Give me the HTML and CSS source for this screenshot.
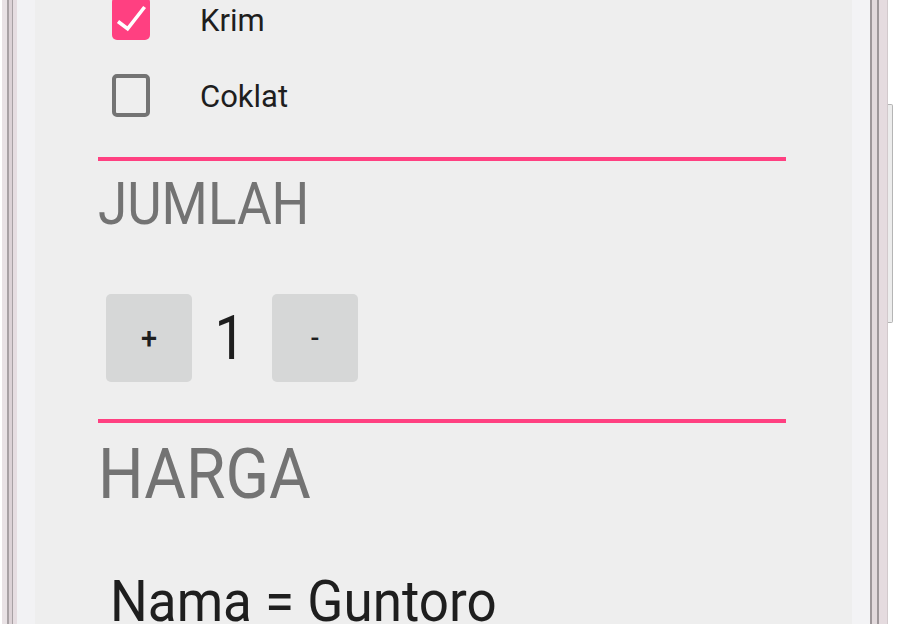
FILE: index.html
```html
<!DOCTYPE html>
<html>
<head>
<meta charset="utf-8">
<link rel="stylesheet" href="styles.css">
</head>
<body>
<div class="device">
  <div class="frame-left"></div>
  <div class="screen">
    <div class="content">
      <div class="checks">
        <div class="check-row">
          <span class="box checked">
            <svg viewBox="0 0 38 43" width="38" height="43"><polyline points="6,24.5 15.6,31.8 32.6,10" fill="none" stroke="#ffffff" stroke-width="3.6"/></svg>
          </span>
          <span class="check-label">Krim</span>
        </div>
        <div class="check-row">
          <span class="box"></span>
          <span class="check-label">Coklat</span>
        </div>
      </div>
      <div class="divider div-one"></div>
      <div class="section-title jumlah"><span class="stretch">JUMLAH</span></div>
      <div class="qty-row">
        <div class="qty-btn">+</div>
        <div class="qty-num"><span class="stretch">1</span></div>
        <div class="qty-btn minus">-</div>
      </div>
      <div class="divider div-two"></div>
      <div class="section-title harga"><span class="stretch">HARGA</span></div>
      <div class="summary"><span class="stretch">Nama = Guntoro</span></div>
    </div>
  </div>
  <div class="frame-right">
    <div class="side-button"></div>
  </div>
</div>
</body>
</html>
```

FILE: styles.css
```css
html, body {
  margin: 0;
  padding: 0;
  background: #ffffff;
}
body {
  width: 916px;
  height: 624px;
  overflow: hidden;
  font-family: Roboto, "Noto Sans", "Liberation Sans", sans-serif;
}
.device {
  display: flex;
  height: 624px;
}
.frame-left {
  width: 17px;
  flex: none;
  background: linear-gradient(to right,
    #ffffff 0 2px,
    #e9e2e5 2px 7px,
    #a8a1a4 7px 9px,
    #dcd2d6 9px 12px,
    #a8a1a4 12px 13.5px,
    #e6dde1 13.5px 17px);
}
.screen {
  width: 853px;
  flex: none;
  background: #eeeeee;
  border-left: 18px solid #f2f2f4;
  border-right: 18px solid #f3f3f5;
  box-sizing: border-box;
  overflow: hidden;
}
.content {
  padding-left: 63px;
  padding-right: 66px;
}
.checks {
  margin-top: -19px;
}
.check-row {
  height: 76px;
  display: flex;
  align-items: center;
  padding-left: 14px;
}
.box {
  width: 38px;
  height: 43px;
  box-sizing: border-box;
  border: 4px solid #737373;
  border-radius: 5px;
  flex: none;
  display: block;
}
.box.checked {
  background: #ff4081;
  border: none;
  position: relative;
  top: -0.5px;
}
.box svg {
  display: block;
}
.check-label {
  margin-left: 50px;
  font-size: 31px;
  color: #1e1e1e;
  position: relative;
  top: 1px;
}
.divider {
  height: 4px;
  background: #ff4081;
}
.div-one {
  margin-top: 24px;
}
.section-title {
  color: #737373;
  line-height: 1;
}
.stretch {
  display: inline-block;
  transform-origin: 0 0;
}
.jumlah {
  margin-top: 14px;
  font-size: 53px;
  height: 54px;
}
.jumlah .stretch {
  transform: scaleY(1.12);
}
.qty-row {
  margin-top: 65px;
  display: flex;
  align-items: center;
  padding-left: 8px;
}
.qty-btn {
  width: 86px;
  height: 88px;
  background: #d6d7d7;
  border-radius: 5px;
  display: flex;
  align-items: center;
  justify-content: center;
  font-size: 29px;
  font-weight: 500;
  color: #1e1e1e;
}
.qty-btn.minus {
  font-size: 26px;
}
.qty-num {
  width: 80px;
  text-align: center;
  font-size: 55px;
  line-height: 1;
  color: #1e1e1e;
}
.qty-num .stretch {
  transform-origin: 50% 50%;
  transform: scaleY(1.1);
  position: relative;
  left: -2px;
}
.div-two {
  margin-top: 37px;
}
.harga {
  margin-top: 17px;
  font-size: 64px;
  height: 64px;
}
.harga .stretch {
  transform: scaleY(1.1);
}
.summary {
  margin-top: 69px;
  padding-left: 12px;
  font-size: 53px;
  line-height: 1;
  color: #1e1e1e;
}
.summary .stretch {
  transform: scaleY(1.1);
}
.frame-right {
  width: 18px;
  flex: none;
  position: relative;
  background: linear-gradient(to right,
    #9d9699 0 2px,
    #e2d9dc 2px 7px,
    #9d9699 7px 9px,
    #e5dbdf 9px 17px,
    #d2c9cc 17px 18px);
}
.side-button {
  position: absolute;
  left: 18px;
  top: 104px;
  width: 5px;
  height: 219px;
  box-sizing: border-box;
  background: #ececec;
  border: 1px solid #b5b5b5;
  border-left: none;
  border-radius: 0 2px 2px 0;
}
```
